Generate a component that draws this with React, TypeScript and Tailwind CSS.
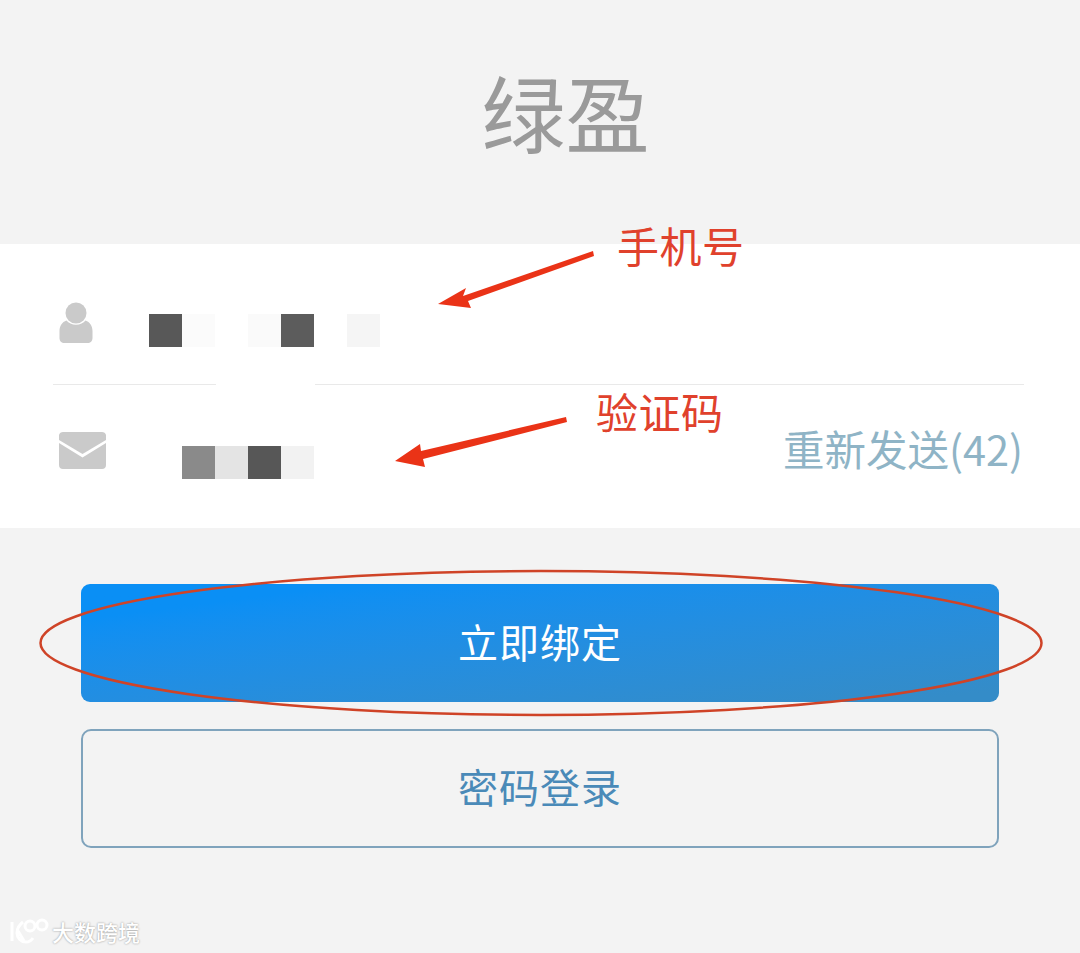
const cjk = "font-['Noto_Sans_CJK_SC','Liberation_Sans',sans-serif]";

const Cells = ({ colors }: { colors: string[] }) => (
  <div className="flex">
    {colors.map((c, i) => (
      <div key={i} className={`w-[33px] h-[33px] ${c}`} />
    ))}
  </div>
);

const UserIcon = () => (
  <svg width="34" height="41" viewBox="0 0 34 41" className="block">
    <circle cx="17" cy="11" r="10.5" fill="#cacaca" />
    <path d="M7.500 18.500c2 2.500 5.500 4.200 9.500 4.200s7.500-1.700 9.500-4.200c4.500 1.500 7 5.500 7 10.500V36c0 3-2 5-5 5H5.500c-3 0-5-2-5-5v-7c0-5 2.500-9 7-10.500z" fill="#cacaca" />
  </svg>
);

const MailIcon = () => (
  <svg width="47" height="37" viewBox="0 0 47 37" className="block">
    <path d="M4 0h39c2 0 3.500 1 4 3v5L23.500 22 0 8V3c.5-2 2-3 4-3z" fill="#cacaca" />
    <path d="M0 11l23.500 14.500L47 11v22c0 2.500-1.500 4-4 4H4c-2.500 0-4-1.500-4-4z" fill="#cacaca" />
  </svg>
);

const Watermark = () => (
  <div className="absolute left-[9px] top-[917px] flex items-center gap-[1px]">
    <svg width="42" height="28" viewBox="0 0 42 28" fill="none" stroke="#fff" strokeWidth="3">
      <path d="M3 5v19" />
      <path d="M14 5c-4 3-6 7-6 11 0 5 4 9 9 9 3 0 5-1 7-4" />
      <path d="M9 14l6 10" />
      <circle cx="21" cy="9" r="5" />
      <circle cx="33" cy="8" r="5" />
    </svg>
    <span className={`${cjk} text-[22px] leading-[28px] text-white font-medium [text-shadow:0_0_2px_#8a8a8a]`}>大数跨境</span>
  </div>
);

const Annotations = () => (
  <>
    <svg className="absolute left-0 top-0" width="1080" height="953" fill="none">
      <path d="M593 251L463 296L466 288L438 304L471 308L468 301L594 256z" fill="#ea3317" />
      <path d="M566 417L421 451L420 444L395 461L425 467L423 459L567 422z" fill="#ea3317" />
      <ellipse cx="541" cy="643" rx="500.500" ry="72" stroke="#cf4327" strokeWidth="2.500" />
    </svg>
    <span className={`${cjk} absolute left-[617px] top-[216px] text-[42px] tracking-[0.5px] leading-[58px] text-[#e0412c]`}>手机号</span>
    <span className={`${cjk} absolute left-[596px] top-[382px] text-[42px] tracking-[0.5px] leading-[58px] text-[#e0412c]`}>验证码</span>
  </>
);

export default function App() {
  return (
    <div className={`${cjk} relative w-[1080px] h-[953px] overflow-hidden bg-[#f3f3f3]`}>
      <header className="h-[244px] flex items-center justify-center pb-[23px] pl-[51px]">
        <h1 className="text-[84px] leading-none font-normal text-[#9a9a9a]">绿盈</h1>
      </header>

      <section className="h-[284px] bg-white pl-[53px] pr-[56px] flex flex-col">
        <div className="h-[140px] flex items-start pl-[6px] pt-[58px]">
          <UserIcon />
          <div className="ml-[56px] mt-[12px]">
            <Cells colors={["bg-[#585858]", "bg-[#fbfbfb]", "bg-white", "bg-[#fafafa]", "bg-[#5c5c5c]", "bg-white", "bg-[#f5f5f5]"]} />
          </div>
        </div>
        <div className="flex h-px">
          <div className="w-[163px] bg-[#e9e9e9]" />
          <div className="w-[99px]" />
          <div className="flex-1 bg-[#e9e9e9]" />
        </div>
        <div className="flex-1 flex items-start pl-[6px] pt-[47px]">
          <MailIcon />
          <div className="ml-[76px] mt-[14px]">
            <Cells colors={["bg-[#8a8a8a]", "bg-[#e4e4e4]", "bg-[#575757]", "bg-[#f2f2f2]"]} />
          </div>
          <span className="ml-auto mt-[-12px] mr-[1px] text-[41.5px] leading-[56px] text-[#8fb4c6]">重新发送(42)</span>
        </div>
      </section>

      <section className="px-[81px] pt-[56px] flex flex-col gap-[27px]">
        <button className="h-[118px] pb-[5px] rounded-[9px] bg-gradient-to-br from-[#0a8ff5] from-15% to-[#348cc8] to-95% text-white text-[40px] tracking-[1px]">
          立即绑定
        </button>
        <button className="h-[119px] pb-[5px] rounded-[10px] border-2 border-[#7fa3bc] text-[#4a8ab8] text-[40px] tracking-[1px]">
          密码登录
        </button>
      </section>

      <Annotations />
      <Watermark />
    </div>
  );
}
